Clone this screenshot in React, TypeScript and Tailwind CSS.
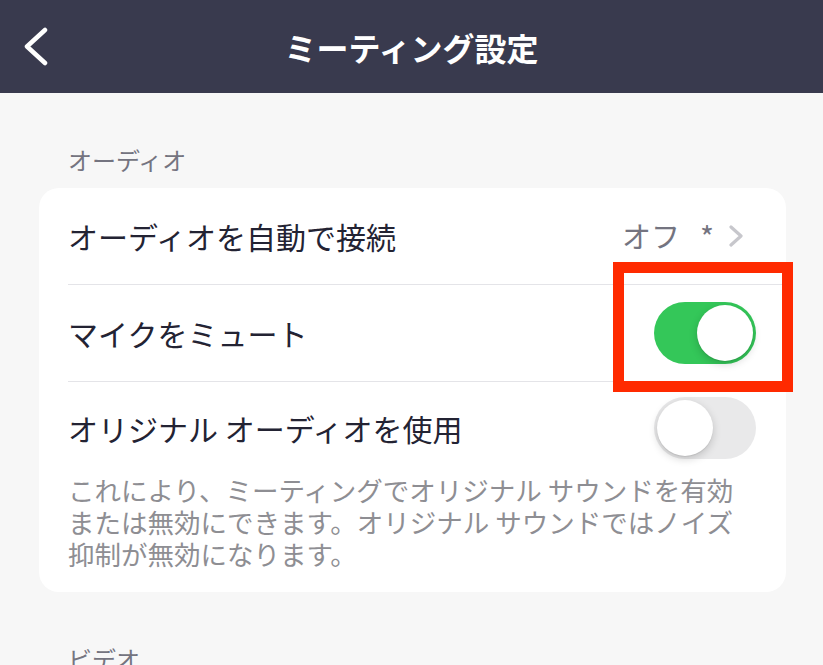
import React from 'react';

const FONT = '"Noto Sans CJK JP", "Noto Sans", sans-serif';

// iOS style switch, fixed 102x62 as in the screenshot
const Toggle = ({ on }: { on: boolean }) => (
  <div
    className={`flex h-[62px] w-[102px] shrink-0 items-center rounded-full p-[3px] ${
      on ? 'justify-end bg-[#34c759]' : 'justify-start bg-[#e9e9ea]'
    }`}
  >
    <div className="h-[56px] w-[56px] rounded-full bg-white shadow-[0_3px_8px_rgba(0,0,0,0.18),0_1px_1px_rgba(0,0,0,0.08)]" />
  </div>
);

const Divider = () => <div className="h-px bg-[#e4e4e8]" />;

export default function App() {
  return (
    <div
      className="h-[665px] w-[823px] overflow-hidden bg-[#f7f7f7]"
      style={{ fontFamily: FONT }}
    >
      <header className="grid h-[93px] grid-cols-[100px_1fr_100px] items-center bg-[#393a4e]">
        <div className="pl-[24px]">
          <svg width="26" height="40" viewBox="0 0 26 40" fill="none">
            <polyline
              points="21,3 3,19.5 21,36"
              stroke="white"
              strokeWidth="4.5"
              strokeLinecap="round"
              strokeLinejoin="round"
            />
          </svg>
        </div>
        <h1 className="text-center text-[32px] font-bold leading-none text-white">ミーティング設定</h1>
        <div />
      </header>

      <div className="pl-[68px] pt-[51px] pb-[12px] text-[24px] leading-[32px] text-[#747480]">オーディオ</div>

      <div className="relative ml-[39px] w-[747px] rounded-[20px] bg-white pl-[29px]">
        <div className="flex h-[96px] items-center justify-between pr-[42px]">
          <span className="text-[30px] text-[#232333]">オーディオを自動で接続</span>
          <div className="flex items-center">
            <span className="text-[29px] text-[#747480]">オフ</span>
            <span className="ml-[20px] text-[30px] text-[#747480]">*</span>
            <svg className="ml-[14px]" width="16" height="22" viewBox="0 0 16 22" fill="none">
              <polyline
                points="3,2 13,11 3,20"
                stroke="#c7c7cc"
                strokeWidth="3.2"
                strokeLinecap="round"
                strokeLinejoin="round"
              />
            </svg>
          </div>
        </div>
        <Divider />
        <div className="flex h-[96px] items-center justify-between pr-[30px]">
          <span className="text-[30px] text-[#232333]">マイクをミュート</span>
          <Toggle on />
        </div>
        <Divider />
        <div className="flex h-[92px] items-center justify-between pr-[30px]">
          <span className="text-[30px] text-[#232333]">オリジナル オーディオを使用</span>
          <Toggle on={false} />
        </div>
        <p className="pb-[22px] pr-[20px] text-[26.5px] leading-[32px] text-[#8e8e93]">
          これにより、ミーティングでオリジナル サウンドを有効
          <br />
          または無効にできます。オリジナル サウンドではノイズ
          <br />
          抑制が無効になります。
        </p>

        {/* red highlight frame drawn over the mute switch */}
        <div className="pointer-events-none absolute left-[574px] top-[74px] h-[130px] w-[180px] border-[11px] border-[#ff2a00]" />
      </div>

      <div className="pl-[68px] pt-[51px] text-[24px] leading-[32px] text-[#747480]">ビデオ</div>
    </div>
  );
}
